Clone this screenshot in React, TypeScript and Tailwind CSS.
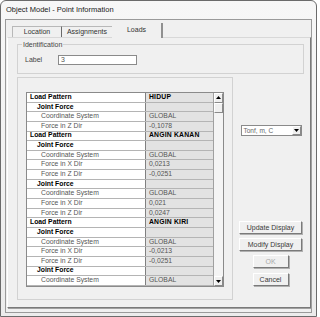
const rows: [string, string, number][] = [
  ['Load Pattern', 'HIDUP', 0],
  ['Joint Force', '', 1],
  ['Coordinate System', 'GLOBAL', 2],
  ['Force in Z Dir', '-0,1078', 2],
  ['Load Pattern', 'ANGIN KANAN', 0],
  ['Joint Force', '', 1],
  ['Coordinate System', 'GLOBAL', 2],
  ['Force in X Dir', '0,0213', 2],
  ['Force in Z Dir', '-0,0251', 2],
  ['Joint Force', '', 1],
  ['Coordinate System', 'GLOBAL', 2],
  ['Force in X Dir', '0,021', 2],
  ['Force in Z Dir', '0,0247', 2],
  ['Load Pattern', 'ANGIN KIRI', 0],
  ['Joint Force', '', 1],
  ['Coordinate System', 'GLOBAL', 2],
  ['Force in X Dir', '-0,0213', 2],
  ['Force in Z Dir', '-0,0251', 2],
  ['Joint Force', '', 1],
  ['Coordinate System', 'GLOBAL', 2],
];

function Btn({ label, w, disabled }: { label: string; w: string; disabled?: boolean }) {
  return (
    <div
      className={`${w} h-[13px] flex items-center justify-center bg-[#f0f0f0] border border-t-white border-l-white border-r-[#7a7a7a] border-b-[#7a7a7a] shadow-[1px_1px_0_#b0b0b0] text-[7px] leading-none ${disabled ? 'text-[#a8a8a8]' : 'text-[#3a3a3a]'}`}
    >
      {label}
    </div>
  );
}

export default function App() {
  return (
    <div className="w-[320px] h-[317px] bg-white font-['Liberation_Sans',sans-serif] overflow-hidden">
      <div className="w-[317px] h-[317px] border border-[#6b6b6b] rounded-t-[6px] bg-gradient-to-b from-[#f7f7f7] to-[#ececec] flex flex-col">
        {/* Title bar */}
        <div className="h-[18px] flex items-center pl-[5px] text-[7.5px] text-[#1a1a1a]">
          Object Model - Point Information
        </div>

        {/* Client area */}
        <div className="mx-[4px] h-[294px] border border-[#9a9a9a] bg-[#f0f0f0] flex flex-col">
          {/* Tabs */}
          <div className="flex items-end h-[17px] pl-[6px] text-[7px] text-[#333]">
            <div className="w-[50px] h-[11px] flex items-center justify-center border border-b-0 border-[#b8b8b8] border-r-[#6a6a6a]">Location</div>
            <div className="w-[50px] h-[11px] flex items-center justify-center border-t border-[#b8b8b8]">Assignments</div>
            <div className="w-[51px] h-[15px] flex items-start justify-center pt-[2px] border-r-2 border-[#909090] relative top-[1px] bg-[#f0f0f0] z-10">Loads</div>
          </div>

          {/* Tab page */}
          <div className="ml-[1px] w-[304px] h-[271px] border border-l-white border-t-[#d8d8d8] border-r-[#7a7a7a] border-b-[#7a7a7a] shadow-[1px_1px_0_#a0a0a0] flex flex-col pl-[9px] pt-[6px]">
            {/* Identification */}
            <div className="w-[287px] h-[30px] border border-[#d2d2d2] relative flex items-center pl-[7px] pt-[2px] text-[7px] text-[#444]">
              <span className="absolute -top-[5px] left-[4px] bg-[#f0f0f0] px-[1px]">Identification</span>
              <span className="w-[33px]">Label</span>
              <div className="w-[79px] h-[10px] bg-white border border-[#8a8a8a] flex items-center pl-[2px] text-[7px] text-[#555]">3</div>
            </div>

            <div className="flex mt-[3px]">
              {/* Data groupbox */}
              <div className="w-[216px] h-[223px] border border-[#d2d2d2] pl-[8px] pt-[14px]">
                <div className="flex w-[198px] h-[195px] border border-[#8a8a8a]">
                  <div className="flex-1 flex flex-col">
                    {rows.map(([k, v, lvl], i) => (
                      <div key={i} className="flex h-[9.65px] border-b border-[#b4b4b4] text-[6.8px] leading-none">
                        <div
                          className={`w-[119px] flex items-center bg-white border-r border-[#808080] ${
                            lvl === 0 ? 'pl-[3px] font-bold text-black' : lvl === 1 ? 'pl-[10px] font-bold text-black' : 'pl-[14px] text-[#555]'
                          }`}
                        >
                          {k}
                        </div>
                        <div className={`flex-1 flex items-center pl-[3px] bg-[#e2e2e2] ${lvl === 0 ? 'font-bold text-black tracking-[0.2px]' : 'text-[#555]'}`}>
                          {v}
                        </div>
                      </div>
                    ))}
                  </div>
                  {/* Scrollbar */}
                  <div className="w-[10px] flex flex-col bg-[#f4f4f4] border-l border-[#a0a0a0]">
                    <div className="h-[9.65px] flex items-center justify-center bg-[#f0f0f0] border border-t-white border-l-white border-r-[#8a8a8a] border-b-[#8a8a8a]">
                      <svg width="5" height="3" viewBox="0 0 5 3"><path d="M2.5 0 L5 3 L0 3 Z" fill="#000" /></svg>
                    </div>
                    <div className="h-[10px] bg-[#f0f0f0] border border-t-white border-l-white border-r-[#8a8a8a] border-b-[#8a8a8a]" />
                    <div className="flex-1" />
                    <div className="h-[9.65px] flex items-center justify-center bg-[#f0f0f0] border border-t-white border-l-white border-r-[#8a8a8a] border-b-[#8a8a8a]">
                      <svg width="5" height="3" viewBox="0 0 5 3"><path d="M0 0 L5 0 L2.5 3 Z" fill="#000" /></svg>
                    </div>
                  </div>
                </div>
              </div>

              {/* Right column */}
              <div className="ml-[6px] w-[63px] flex flex-col items-center">
                <div className="mt-[48px] ml-[1px] w-[61px] h-[11px] bg-white border border-[#8a8a8a] flex items-center text-[6.5px] text-[#666]">
                  <span className="flex-1 pl-[2px]">Tonf, m, C</span>
                  <div className="w-[9px] h-[9px] flex items-center justify-center bg-[#f0f0f0] border border-t-white border-l-white border-r-[#8a8a8a] border-b-[#8a8a8a]">
                    <svg width="5" height="3" viewBox="0 0 5 3"><path d="M0 0 L5 0 L2.5 3 Z" fill="#000" /></svg>
                  </div>
                </div>
                <div className="mt-[85px]">
                  <Btn label="Update Display" w="w-[63px]" />
                </div>
                <div className="mt-[4px]">
                  <Btn label="Modify Display" w="w-[63px]" />
                </div>
                <div className="mt-[4px]">
                  <Btn label="OK" w="w-[36px]" disabled />
                </div>
                <div className="mt-[5px]">
                  <Btn label="Cancel" w="w-[36px]" />
                </div>
              </div>
            </div>
          </div>
        </div>
      </div>
    </div>
  );
}
